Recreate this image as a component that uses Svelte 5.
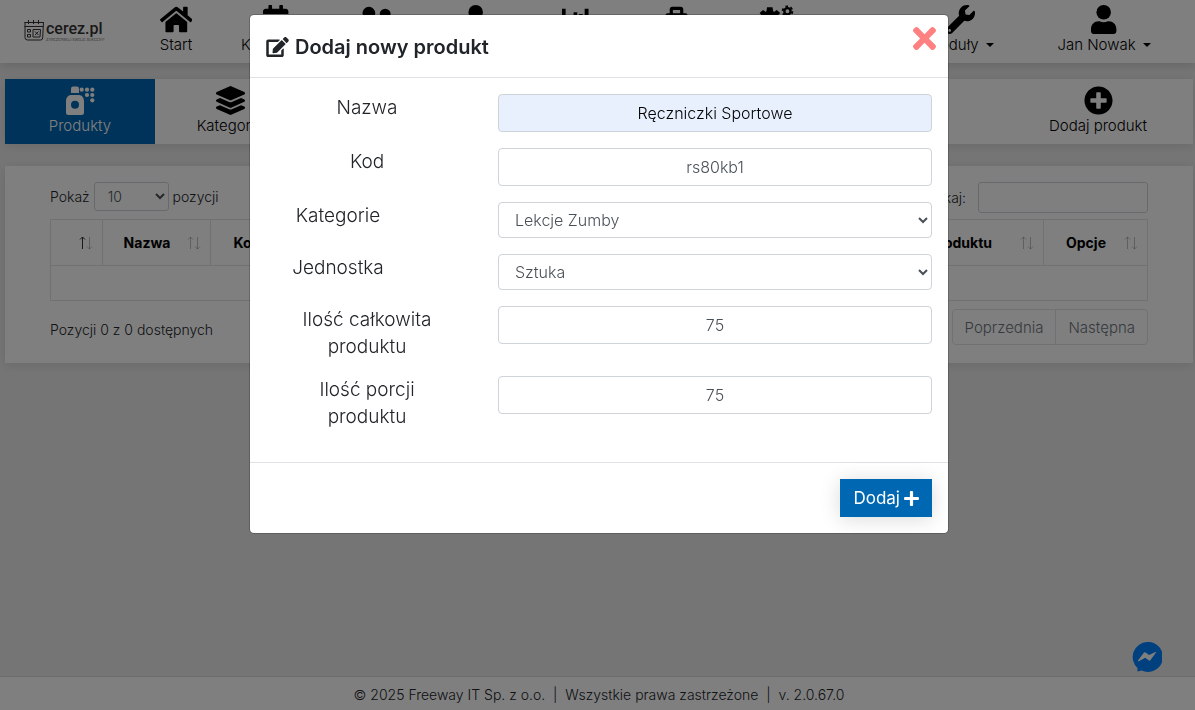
<script lang="ts">
    type NavItem = { icon: string, label?: string, menu?: boolean }

    const nav: NavItem[] = [
        { icon: 'home', label: 'Start' },
        { icon: 'calendar', label: 'Kalendarz' },
        { icon: 'friends' },
        { icon: 'user' },
        { icon: 'chart' },
        { icon: 'bag' },
        { icon: 'cogs' }
    ]
    const menus: NavItem[] = [
        { icon: 'wrench', label: 'Moduły', menu: true },
        { icon: 'user', label: 'Jan Nowak', menu: true }
    ]
    const columns = ['', 'Nazwa', 'Kod', '', 'Ilość produktu', 'Opcje']

    let open = $state(true)
    let sorted = $state(0)
    let product = $state({
        name: 'Ręczniczki Sportowe',
        code: 'rs80kb1',
        category: 'Lekcje Zumby',
        unit: 'Sztuka',
        total: '75',
        portions: '75'
    })
</script>

{#snippet icon(name: string)}
    {#if name === 'home'}
        <svg class="icon" viewBox="0 0 576 512"><path d="M280.37 148.26L96 300.11V464a16 16 0 0 0 16 16l112.06-.29a16 16 0 0 0 15.92-16V368a16 16 0 0 1 16-16h64a16 16 0 0 1 16 16v95.64a16 16 0 0 0 16 16.05L464 480a16 16 0 0 0 16-16V300L295.67 148.26a12.19 12.19 0 0 0-15.3 0zM571.6 251.47L488 182.56V44.05a12 12 0 0 0-12-12h-56a12 12 0 0 0-12 12v72.61L318.47 43a48 48 0 0 0-61 0L4.34 251.47a12 12 0 0 0-1.6 16.9l25.5 31A12 12 0 0 0 45.15 301l235.22-193.74a12.19 12.19 0 0 1 15.3 0L530.9 301a12 12 0 0 0 16.9-1.6l25.5-31a12 12 0 0 0-1.7-16.93z" /></svg>
    {:else if name === 'calendar'}
        <svg class="icon" viewBox="0 0 448 512"><path d="M12 192h424c6.6 0 12 5.4 12 12v260c0 26.5-21.5 48-48 48H48c-26.5 0-48-21.5-48-48V204c0-6.6 5.4-12 12-12zm436-44v-36c0-26.5-21.5-48-48-48h-48V12c0-6.6-5.4-12-12-12h-40c-6.6 0-12 5.4-12 12v52H160V12c0-6.6-5.4-12-12-12h-40c-6.6 0-12 5.4-12 12v52H48C21.5 64 0 85.5 0 112v36c0 6.6 5.4 12 12 12h424c6.6 0 12-5.4 12-12z" /></svg>
    {:else if name === 'friends'}
        <svg class="icon" viewBox="0 0 640 512"><circle cx="192" cy="144" r="112" /><circle cx="480" cy="160" r="96" /><path d="M0 480v-80c0-64 52-112 116-112h152c64 0 116 48 116 112v80zM416 448v-64c0-32-12-58-30-80 10-10 30-16 54-16h80c66 0 120 50 120 112v48z" /></svg>
    {:else if name === 'user'}
        <svg class="icon" viewBox="0 0 448 512"><circle cx="224" cy="128" r="128" /><path d="M313.6 288h-16.7c-22.2 10.2-46.9 16-72.9 16s-50.6-5.8-72.9-16h-16.7C60.2 288 0 348.2 0 422.4V464c0 26.5 21.5 48 48 48h352c26.5 0 48-21.5 48-48v-41.6c0-74.2-60.2-134.4-134.4-134.4z" /></svg>
    {:else if name === 'chart'}
        <svg class="icon" viewBox="0 0 512 512"><path d="M0 64h64v320h448v64H0zM109 256h64v96h-64zM205 128h64v224h-64zM301 160h64v192h-64zM400 64h68v288h-68z" /></svg>
    {:else if name === 'bag'}
        <svg class="icon" viewBox="0 0 512 512"><path d="M136 192V80c0-26 18-48 48-48h144c30 0 48 22 48 48v112h-56V88H192v104zM96 144h320c18 0 32 14 32 32v272c0 18-14 32-32 32H96c-18 0-32-14-32-32V176c0-18 14-32 32-32z" /></svg>
    {:else if name === 'cogs'}
        <svg class="icon" viewBox="0 0 640 512">
            <circle cx="210" cy="270" r="112" fill="none" stroke="#000" stroke-width="110" />
            <path d="M160 40h96l14 84H146zM28 140l60-50 90 60-80 70zM392 140l-60-50-90 60 80 70z" />
            <circle cx="520" cy="110" r="55" fill="none" stroke="#000" stroke-width="42" />
            <circle cx="520" cy="110" r="86" fill="none" stroke="#000" stroke-width="34" stroke-dasharray="45 45" />
        </svg>
    {:else if name === 'wrench'}
        <svg class="icon" viewBox="0 0 512 512"><path d="M507.73 109.1c-2.24-9.03-13.54-12.09-20.12-5.51l-74.36 74.36-67.88-11.31-11.31-67.88 74.36-74.36c6.62-6.62 3.43-17.9-5.66-20.16-47.38-11.74-99.55.91-136.58 37.93-39.64 39.64-50.55 97.1-34.05 147.2L18.74 402.76c-24.99 24.99-24.99 65.51 0 90.5 24.99 24.99 65.51 24.99 90.5 0l213.21-213.21c50.12 16.71 107.47 5.68 147.37-34.22 37.07-37.07 49.7-89.32 37.91-136.73zM64 472c-13.25 0-24-10.75-24-24 0-13.26 10.75-24 24-24s24 10.74 24 24c0 13.25-10.75 24-24 24z" /></svg>
    {:else if name === 'spray'}
        <svg class="icon" viewBox="0 0 30 29">
            <path d="M6 7V2.5a2 2 0 0 1 2-2h4a2 2 0 0 1 2 2V7z" />
            <path fill-rule="evenodd" d="M6 9h8c3 0 5 3 5 6v11.5a2.5 2.5 0 0 1-2.5 2.5h-13A2.5 2.5 0 0 1 1 26.5V15c0-3 2-6 5-6zM10 14.7a4 4 0 1 0 0 8 4 4 0 0 0 0-8z" />
            {#each [[16.7, 3.7], [22, 3.7], [27.3, 3.7], [22, 9], [27.3, 9], [27.3, 14.3]] as [cx, cy]}
                <circle {cx} {cy} r="2.1" />
            {/each}
        </svg>
    {:else if name === 'layers'}
        <svg class="icon" viewBox="0 0 512 512"><path d="M12.41 148.02l232.94 105.67c6.8 3.09 14.49 3.09 21.29 0l232.94-105.67c16.55-7.51 16.55-32.52 0-40.03L266.65 2.31a25.607 25.607 0 0 0-21.29 0L12.41 107.98c-16.55 7.51-16.55 32.53 0 40.04zm487.18 88.28l-58.09-26.33-161.64 73.27c-7.56 3.43-15.59 5.17-23.86 5.17s-16.29-1.74-23.86-5.17L70.51 209.97l-58.1 26.33c-16.55 7.5-16.55 32.5 0 40l232.94 105.59c6.8 3.08 14.49 3.08 21.29 0L499.59 276.3c16.55-7.5 16.55-32.5 0-40zm0 127.8l-57.87-26.23-161.86 73.37c-7.56 3.43-15.59 5.17-23.86 5.17s-16.29-1.74-23.86-5.17L70.29 337.87 12.41 364.1c-16.55 7.5-16.55 32.5 0 40l232.94 105.59c6.8 3.08 14.49 3.08 21.29 0L499.59 404.1c16.55-7.5 16.55-32.5 0-40z" /></svg>
    {:else if name === 'plus-circle'}
        <svg class="icon" viewBox="0 0 512 512"><path d="M256 8C119 8 8 119 8 256s111 248 248 248 248-111 248-248S393 8 256 8zm144 276c0 6.6-5.4 12-12 12h-92v92c0 6.6-5.4 12-12 12h-56c-6.6 0-12-5.4-12-12v-92h-92c-6.6 0-12-5.4-12-12v-56c0-6.6 5.4-12 12-12h92v-92c0-6.6 5.4-12 12-12h56c6.6 0 12 5.4 12 12v92h92c6.6 0 12 5.4 12 12v56z" /></svg>
    {/if}
{/snippet}

{#snippet navLink(item: NavItem)}
    <a class="nav-link" href="#{item.icon}">
        {@render icon(item.icon)}
        {#if item.label}
            <span class:caret={item.menu}>{item.label}</span>
        {/if}
    </a>
{/snippet}

<div class="page">
    <header>
        <a class="logo" href="#start">
            <svg viewBox="0 0 20 21" fill="none" stroke="#333">
                <path d="M.5 2.5h19M.5 6.5h19M1 2v15.5q0 2.500 2.500 2.500h13q2 0 2.200-2L19.500 2M4.500 0v4M9.500 0v4M14.500 0v4" />
                <path d="M3.500 9.500h3v2.500h-3zM3.500 14.500h3V17h-3zM9 9.500h7.500L16 17H9zM11 11.500l3.500 3.500M14.500 11.500L11 15" />
            </svg>
            <span class="brand">
                <strong>cerez.pl</strong>
                <small>ZAREZERWUJ SWOJE SUKCESY!</small>
            </span>
        </a>
        <nav>
            {#each nav as item}
                {@render navLink(item)}
            {/each}
        </nav>
        <nav class="menus">
            {#each menus as item}
                {@render navLink(item)}
            {/each}
        </nav>
    </header>

    <div class="tabs">
        <a class="tab active" href="#produkty">{@render icon('spray')}<span>Produkty</span></a>
        <a class="tab" href="#kategorie">{@render icon('layers')}<span>Kategorie</span></a>
        <button class="tab add" onclick={() => open = true}>{@render icon('plus-circle')}<span>Dodaj produkt</span></button>
    </div>

    <main>
        <div class="bar">
            <label>Pokaż
                <select class="length"><option>10</option><option>25</option><option>50</option></select>
                pozycji
            </label>
            <label class="search">Szukaj: <input type="search"></label>
        </div>
        <table>
            <thead>
                <tr>
                    {#each columns as column, i}
                        <th class:sorted={sorted === i} onclick={() => sorted = i}>
                            <div class="head">
                                <span>{column}</span>
                                <svg class="sort" viewBox="0 0 14 14" fill="none" stroke="#000">
                                    <path class="up" d="M3.5 13V1M1 3.5L3.5 1 6 3.5" />
                                    <path d="M10.5 1v12M8 10.5l2.5 2.5 2.5-2.5" />
                                </svg>
                            </div>
                        </th>
                    {/each}
                </tr>
            </thead>
            <tbody>
                <tr><td colspan={columns.length}></td></tr>
            </tbody>
        </table>
        <div class="bar">
            <span class="info">Pozycji 0 z 0 dostępnych</span>
            <div class="pager">
                <button disabled>Poprzednia</button>
                <button disabled>Następna</button>
            </div>
        </div>
    </main>

    <footer>© 2025 Freeway IT Sp. z o.o. &nbsp;|&nbsp; Wszystkie prawa zastrzeżone &nbsp;|&nbsp; v. 2.0.67.0</footer>

    <button class="messenger" aria-label="Messenger">
        <svg viewBox="0 0 30 30">
            <path fill="#0080ff" d="M15 0a15 15 0 1 1-5.5 28.500L5.500 29.500V26A15 15 0 0 1 15 0z" />
            <path fill="#fff" d="M6 18.500l5.800-7.700q.8-1 1.900-.2l3.300 2.500 6.500-3.200q1.200-.4.500.7l-5.500 7.500q-.8 1-1.900.2l-3.400-2.500-6.400 3.400q-1.200.4-.8-.7z" />
        </svg>
    </button>
</div>

{#if open}
    <div class="backdrop">
        <form class="modal" onsubmit={(e) => { e.preventDefault(); open = false }}>
            <div class="modal-header">
                <h5>
                    <svg viewBox="0 0 576 512"><path d="M402.6 83.2l90.2 90.2c3.8 3.8 3.8 10 0 13.8L274.4 405.6l-92.8 10.3c-12.4 1.4-22.9-9.1-21.5-21.5l10.3-92.8L388.8 83.2c3.8-3.8 10-3.8 13.8 0zm162-22.9l-48.8-48.8c-15.2-15.2-39.9-15.2-55.2 0l-35.4 35.4c-3.8 3.8-3.8 10 0 13.8l90.2 90.2c3.8 3.8 10 3.8 13.8 0l35.4-35.4c15.2-15.3 15.2-40 0-55.2zM384 346.2V448H64V128h229.8c3.2 0 6.2-1.3 8.5-3.5l40-40c7.6-7.6 2.2-20.5-8.500-20.500H48C21.500 64 0 85.500 0 112v352c0 26.500 21.500 48 48 48h352c26.500 0 48-21.500 48-48V306.200c0-10.700-12.900-16-20.500-8.500l-40 40c-2.200 2.300-3.500 5.300-3.500 8.500z" /></svg>
                    Dodaj nowy produkt
                </h5>
                <button type="button" class="close" aria-label="Zamknij" onclick={() => open = false}>
                    <svg viewBox="0 80 352 352"><path d="M242.72 256l100.07-100.07c12.28-12.28 12.28-32.19 0-44.48l-22.24-22.24c-12.28-12.28-32.19-12.28-44.48 0L176 189.28 75.93 89.21c-12.28-12.28-32.19-12.28-44.48 0L9.21 111.45c-12.28 12.28-12.28 32.19 0 44.48L109.28 256 9.21 356.07c-12.28 12.28-12.28 32.19 0 44.48l22.24 22.24c12.28 12.28 32.2 12.28 44.48 0L176 322.72l100.07 100.07c12.28 12.28 32.2 12.28 44.48 0l22.24-22.24c12.28-12.28 12.28-32.19 0-44.48L242.72 256z" /></svg>
                </button>
            </div>
            <div class="modal-body">
                <div class="row">
                    <label for="name">Nazwa</label>
                    <input id="name" class="filled" bind:value={product.name}>
                </div>
                <div class="row">
                    <label for="code">Kod</label>
                    <input id="code" bind:value={product.code}>
                </div>
                <div class="row">
                    <label class="narrow" for="category">Kategorie</label>
                    <select id="category" bind:value={product.category}><option>Lekcje Zumby</option></select>
                </div>
                <div class="row">
                    <label class="narrow" for="unit">Jednostka</label>
                    <select id="unit" bind:value={product.unit}><option>Sztuka</option></select>
                </div>
                <div class="row">
                    <label for="total">Ilość całkowita produktu</label>
                    <input id="total" bind:value={product.total}>
                </div>
                <div class="row">
                    <label for="portions">Ilość porcji produktu</label>
                    <input id="portions" bind:value={product.portions}>
                </div>
            </div>
            <div class="modal-footer">
                <button class="submit">Dodaj
                    <svg viewBox="0 0 448 512"><path d="M416 208H272V64c0-17.67-14.33-32-32-32h-32c-17.67 0-32 14.33-32 32v144H32c-17.67 0-32 14.33-32 32v32c0 17.67 14.33 32 32 32h144v144c0 17.67 14.33 32 32 32h32c17.67 0 32-14.33 32-32V304h144c17.67 0 32-14.33 32-32v-32c0-17.67-14.33-32-32-32z" /></svg>
                </button>
            </div>
        </form>
    </div>
{/if}

<style>
    :global(body) {
        background: #ebebeb;
        color: #212529;
        font: 300 14px/21px "Century Gothic", Inter, sans-serif;
    }
    :global(*) {
        box-sizing: border-box;
    }
    a {
        color: inherit;
        text-decoration: none;
    }
    button,
    input,
    select {
        font: inherit;
        color: inherit;
    }
    button {
        border: 0;
        padding: 0;
        background: none;
        cursor: pointer;
    }
    .page {
        display: flex;
        flex-direction: column;
        min-height: 100vh;
    }
    header {
        display: flex;
        justify-content: space-between;
        height: 63px;
        padding-right: 19px;
        background: #fff;
        color: #000;
        box-shadow: 0 2px 10px rgba(0, 0, 0, 0.15);
    }
    .logo {
        display: flex;
        align-items: center;
        gap: 2px;
        width: 126px;
        padding: 0 0 2px 24px;
        color: #333;
    }
    .logo > svg {
        width: 20px;
        height: 21px;
    }
    .brand {
        display: flex;
        flex-direction: column;
        font-family: Roboto, sans-serif;
    }
    .brand strong {
        font-size: 16px;
        font-weight: 500;
        line-height: 17px;
    }
    .brand small {
        font-size: 4px;
        line-height: 5px;
        white-space: nowrap;
    }
    nav {
        display: flex;
        margin-right: auto;
    }
    .nav-link,
    .tab {
        display: flex;
        flex-direction: column;
        align-items: center;
        width: 100px;
        padding-top: 5px;
        font-size: 15px;
        white-space: nowrap;
    }
    .menus {
        margin: 0;
    }
    .menus .nav-link {
        width: 144px;
    }
    .icon {
        height: 29px;
        fill: currentColor;
    }
    .caret::after {
        content: '';
        display: inline-block;
        margin-left: 7px;
        vertical-align: 3px;
        border: 4px solid transparent;
        border-top-color: #000;
        border-bottom: 0;
    }
    .tabs {
        display: flex;
        height: 65px;
        margin: 16px 2px 22px 5px;
        background: #fff;
        color: #000;
        box-shadow: 0 2px 10px rgba(0, 0, 0, 0.1);
    }
    .tab {
        width: 150px;
        padding-top: 7px;
    }
    .tab.active {
        background: #0067b2;
        color: #fff;
    }
    .tab.add {
        margin: 0 20px 0 auto;
    }
    main {
        margin: 0 2px 0 5px;
        padding: 16px 45px 18px;
        background: #fff;
        box-shadow: 0 2px 10px rgba(0, 0, 0, 0.1);
    }
    .bar {
        display: flex;
        justify-content: space-between;
    }
    .length {
        width: 75px;
        height: 29px;
        padding-left: 9px;
        border: 1px solid #ced4da;
        border-radius: 3px;
        background: #fff;
        color: #495057;
    }
    .search input {
        width: 170px;
        height: 31px;
        margin-left: 8px;
        border: 1px solid #ced4da;
        border-radius: 3px;
    }
    table {
        width: 100%;
        margin: 6px 0 8px;
        border-collapse: collapse;
        table-layout: fixed;
    }
    th,
    td {
        border: 1px solid #dee2e6;
    }
    th {
        height: 46px;
        padding: 0 9px 0 20px;
        color: #000;
        font-weight: 700;
        white-space: nowrap;
        cursor: pointer;
    }
    th:nth-child(1) {
        width: 52px;
        padding-left: 0;
    }
    th:nth-child(2) {
        width: 108px;
    }
    th:nth-child(3) {
        width: 92px;
    }
    th:nth-child(5) {
        width: 182px;
    }
    th:nth-child(6) {
        width: 104px;
    }
    td {
        height: 35px;
    }
    .head {
        display: flex;
        align-items: center;
        gap: 16px;
    }
    .head span {
        flex: 1;
    }
    .sort {
        flex: none;
        width: 14px;
        height: 14px;
        opacity: 0.8;
    }
    .sort path {
        opacity: 0.3;
    }
    .sorted .up {
        opacity: 1;
    }
    .info {
        padding-top: 10px;
    }
    .pager {
        display: flex;
        border: 1px solid #dee2e6;
        border-radius: 4px;
    }
    .pager button {
        height: 34px;
        padding: 0 12px;
        color: #6c757d;
        font-size: 15px;
    }
    .pager button + button {
        border-left: 1px solid #dee2e6;
    }
    footer {
        margin-top: auto;
        padding: 7px 0 5px 3px;
        border-top: 1px solid #d8d8d8;
        background: #fff;
        text-align: center;
    }
    .messenger {
        position: fixed;
        right: 33px;
        bottom: 38px;
        width: 30px;
        height: 30px;
    }
    .messenger svg {
        display: block;
    }
    .backdrop {
        position: fixed;
        inset: 0;
        padding: 14px 0 14px 3px;
        overflow: auto;
        background: rgba(0, 0, 0, 0.5);
    }
    .modal {
        max-width: 700px;
        margin: 0 auto;
        border: 1px solid rgba(0, 0, 0, 0.2);
        border-radius: 5px;
        background: #fff;
        background-clip: padding-box;
    }
    .modal-header {
        display: flex;
        justify-content: space-between;
        align-items: flex-start;
        height: 63px;
        padding: 12px 12px 0 16px;
        border-bottom: 1px solid #dee2e6;
    }
    h5 {
        display: flex;
        align-items: center;
        gap: 6px;
        margin: 5px 0 0;
        font-size: 20px;
        font-weight: 600;
        line-height: 30px;
    }
    h5 svg {
        width: 23px;
        height: 20px;
        fill: currentColor;
    }
    .close svg {
        display: block;
        width: 23px;
        height: 23px;
        fill: #ff8080;
    }
    .modal-body {
        display: grid;
        gap: 16px;
        padding: 16px 16px 32px;
    }
    .row {
        display: grid;
        grid-template-columns: 1fr 434px;
        column-gap: 30px;
        align-items: start;
    }
    .row label {
        padding: 0 25px;
        font-size: 19px;
        line-height: 27px;
        text-align: center;
    }
    .row .narrow {
        padding: 0 58px 0 0;
    }
    .row input,
    .row select {
        width: 100%;
        height: 38px;
        padding: 0 12px;
        border: 1px solid #ced4da;
        border-radius: 4px;
        background: #fff;
        color: #495057;
        font-size: 16px;
        text-align: center;
    }
    .row select {
        height: 36px;
        text-align: left;
    }
    .row .filled {
        background: #e8f0fe;
        color: #000;
    }
    .modal-footer {
        display: flex;
        justify-content: flex-end;
        padding: 16px;
        border-top: 1px solid #dee2e6;
    }
    .submit {
        display: flex;
        align-items: center;
        gap: 4px;
        height: 38px;
        padding: 0 13px;
        background: #0067b2;
        color: #fff;
        font-size: 17px;
        font-weight: 400;
        box-shadow: 0 2px 20px rgba(0, 0, 0, 0.15);
    }
    .submit svg {
        width: 15px;
        height: 17px;
        fill: currentColor;
    }
</style>
